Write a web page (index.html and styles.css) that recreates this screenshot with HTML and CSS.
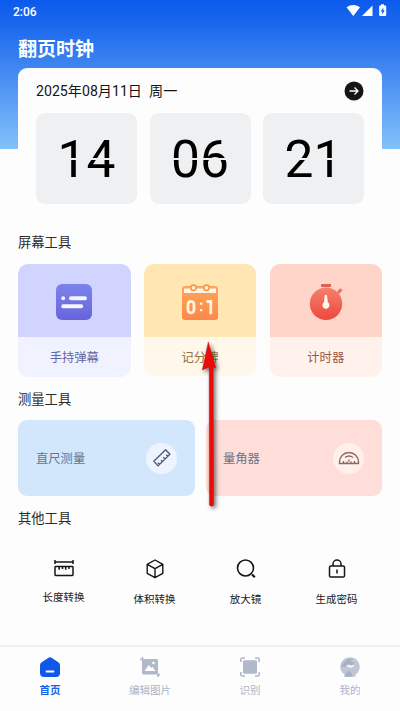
FILE: index.html
```html
<!DOCTYPE html>
<html lang="zh-CN">
<head>
<meta charset="utf-8">
<title>翻页时钟</title>
<link rel="stylesheet" href="styles.css">
</head>
<body>
<div class="app">
  <header class="hero">
    <div class="status">
      <span>2:06</span>
      <svg class="status-icons" width="42" height="14" viewBox="0 0 42 14" fill="#fff">
        <path d="M0.5 3.2Q7.2-1.4 14 3.2L7.3 12Z"/>
        <path d="M26.500 1.500V12H16Z"/>
        <path fill-rule="evenodd" d="M35 1.500V.3h3v1.200h1.400q.8 0 .8.800v9q0 .8-.8.800h-5.400q-.8 0-.8-.8v-9q0-.8.800-.8zM37.300 3.500 34.800 7.600h1.400v2.900l2.500-4.200h-1.400z"/>
      </svg>
    </div>
    <h1>翻页时钟</h1>
  </header>

  <section class="clock">
    <div class="date-row">
      <span class="date">2025年08月11日&nbsp; 周一</span>
      <svg width="20" height="20" viewBox="0 0 20 20"><circle cx="10" cy="10" r="9.500" fill="#151515"/><path d="M5.500 10h8.500M10.500 6.500 14 10l-3.500 3.500" fill="none" stroke="#fff" stroke-width="1.300"/></svg>
    </div>
    <div class="flips">
      <div class="flip">14</div>
      <div class="flip">06</div>
      <div class="flip">21</div>
    </div>
  </section>

  <h2 class="h-screen">屏幕工具</h2>
  <section class="cards">
    <div class="card violet">
      <div class="art">
        <svg width="36" height="36" viewBox="0 0 36 36">
          <defs><linearGradient id="gv" x2="0" y2="1"><stop stop-color="#7c83ec"/><stop offset="1" stop-color="#6864dc"/></linearGradient></defs>
          <rect width="36" height="36" rx="6" fill="url(#gv)"/>
          <g stroke="#f3f5ff" stroke-width="4" stroke-linecap="round"><path d="M7.200 14.200h.01M15 14.200h14M7.200 22.200h18"/></g>
        </svg>
      </div>
      <div class="label">手持弹幕</div>
    </div>
    <div class="card yellow">
      <div class="art">
        <svg width="36" height="36" viewBox="0 0 36 36">
          <defs><linearGradient id="gy" x2="0" y2="1"><stop stop-color="#ffa65a"/><stop offset="1" stop-color="#fc884b"/></linearGradient></defs>
          <rect y="2" width="36" height="34" rx="3" fill="url(#gy)"/>
          <path d="M2 4.500h32v4.500h-32z" fill="#fff6e7"/>
          <circle cx="11.500" cy="3.700" r="2.700" fill="#fff0d2" stroke="#fb9140" stroke-width="1.500"/>
          <circle cx="24.500" cy="3.700" r="2.700" fill="#fff0d2" stroke="#fb9140" stroke-width="1.500"/>
          <g fill="none" stroke="#fff5df" stroke-width="2.800"><rect x="6" y="17.300" width="6" height="11.500" rx="3"/><path d="M24.500 17.500h4.300v12.700"/></g>
          <path d="M18 18.500h2.200v2.200H18zM18 25h2.200v2.200H18z" fill="#fff5df"/>
        </svg>
      </div>
      <div class="label">记分牌</div>
    </div>
    <div class="card coral">
      <div class="art">
        <svg width="36" height="36" viewBox="0 0 36 36">
          <defs><linearGradient id="gr" x2="0" y2="1"><stop stop-color="#f3816c"/><stop offset="1" stop-color="#ed483f"/></linearGradient></defs>
          <rect x="13" y="0" width="10" height="3" rx=".8" fill="#da6254"/>
          <path d="m28.500 10.500 3-3" stroke="#ed7060" stroke-width="2"/><path d="m30.300 8.300 3.200-3" stroke="#ed7060" stroke-width="3.200"/>
          <circle cx="18" cy="19.800" r="16.200" fill="url(#gr)"/>
          <path d="M16.600 12.500q.1-1.800 1.300-1.800t1.300 1.800l.6 5.800a3.500 3.500 0 1 1-3.800 0z" fill="#fff5ee"/>
        </svg>
      </div>
      <div class="label">计时器</div>
    </div>
  </section>

  <h2 class="h-measure">测量工具</h2>
  <section class="measures">
    <div class="measure blue">
      <span>直尺测量</span>
      <i class="disc"><svg width="20" height="20" viewBox="0 0 20 20" fill="none" stroke="#4d5a76" stroke-width="1.300" stroke-linejoin="round"><path d="M1.800 13.200 13.600 1.700 17.900 6.200 6.100 17.900ZM7.500 16.500 5.800 14.600M10.300 13.700 9 12.300M13 11 11.300 9.100M15.700 8.300 14.300 6.800"/></svg></i>
    </div>
    <div class="measure pink">
      <span>量角器</span>
      <i class="disc"><svg width="22" height="20" viewBox="0 0 22 20" fill="none" stroke="#8b6963" stroke-width="1.400" stroke-linejoin="round"><path d="M1.500 15.500V14a9.500 9.500 0 0 1 19 0v1.500ZM5.500 15v-2M9 15v-1.500M13 15v-1.500M16.500 15v-2M7 9.500Q11 6.500 15 9.500M11 11.500v2"/></svg></i>
    </div>
  </section>

  <h2 class="h-other">其他工具</h2>
  <section class="tools">
    <div class="tool first">
      <svg width="22" height="20" viewBox="0 0 22 20" fill="none" stroke="#161616" stroke-width="1.500"><path d="M2 1v4M20 1v4M2 3h18"/><rect x="2" y="7.500" width="18" height="9" rx=".7"/><path d="M6.200 8v2.700M9.500 8v2M12.700 8v2.700M16 8v2"/></svg>
      <span>长度转换</span>
    </div>
    <div class="tool">
      <svg width="22" height="20" viewBox="0 0 22 20" fill="none" stroke="#161616" stroke-width="1.400" stroke-linejoin="round"><path d="m11 1 7.800 4.300v9L11 18.700l-7.800-4.400v-9zM3.200 5.400 11 9.700l7.800-4.300M11 9.700v9"/></svg>
      <span>体积转换</span>
    </div>
    <div class="tool">
      <svg width="22" height="20" viewBox="0 0 22 20" fill="none" stroke="#161616" stroke-width="1.600"><circle cx="10.500" cy="9" r="8"/><path stroke-width="2.200" d="m17 15.500 2.800 2.800"/></svg>
      <span>放大镜</span>
    </div>
    <div class="tool">
      <svg width="22" height="20" viewBox="0 0 22 20" fill="none" stroke="#161616" stroke-width="1.500"><rect x="3.500" y="7" width="15" height="11" rx="1.300"/><path d="M7 7V5a4 4 0 0 1 8 0v2M11 10.500v4"/></svg>
      <span>生成密码</span>
    </div>
  </section>

  <nav class="tabs">
    <div class="tab active">
      <svg width="22" height="20" viewBox="0 0 22 20"><path d="M9.500.8q1.500-1 3 0l6.800 4.400q1.700 1.100 1.700 3V16q0 4-4 4H5q-4 0-4-4V8.200q0-1.900 1.700-3z" fill="#1059e8"/><path d="M7.500 14.500h7" stroke="#fff" stroke-width="1.800" stroke-linecap="round"/></svg>
      <span>首页</span>
    </div>
    <div class="tab">
      <svg width="22" height="20" viewBox="0 0 22 20"><path d="M3.500 0v3M1 2.500h3M19 17v3M18 17.700h3" stroke="#b0b8ca" stroke-width="1.700"/><rect x="3" y="2" width="16" height="15.500" rx="1.500" fill="#b0b8ca"/><path d="m5.500 14 4.300-6 2.500 3 1-1.200 3.200 4.200z" fill="#fff"/><circle cx="14.500" cy="6" r="1.300" fill="#fff"/></svg>
      <span>编辑图片</span>
    </div>
    <div class="tab">
      <svg width="22" height="20" viewBox="0 0 22 20"><path d="M1.800 5V2.500Q1.800 1 3.300 1H6M16 1h2.700q1.500 0 1.500 1.500V5M20.200 15v2.500q0 1.500-1.500 1.500H16M6 19H3.300q-1.500 0-1.500-1.500V15" fill="none" stroke="#b0b8ca" stroke-width="1.600"/><rect x="4" y="3.200" width="14" height="13.600" rx="1" fill="#b0b8ca"/></svg>
      <span>识别</span>
    </div>
    <div class="tab">
      <svg width="22" height="20" viewBox="0 0 22 20"><path d="M11 .2a9.500 9.500 0 0 1 5.500 17.300v2.300h-11v-2.300A9.500 9.500 0 0 1 11 .2z" fill="#bfc7d4"/><path d="M1.500 9.500 8.500 2l6-.5L9 6.500l-3 3.500zM5.500 19.800q1-4.300 5.500-6.300l2.800 6.300z" fill="#a6b1c3"/><path d="M7.500 9.300Q11.500 5 15.500 8.500 12 12.500 7.500 9.300z" fill="#f5f7fb"/><path d="M7 5.500q4-2.500 8.500.5L13 8.500 9 7.500z" fill="#a6b1c3"/></svg>
      <span>我的</span>
    </div>
  </nav>

  <svg class="pointer" width="28" height="174" viewBox="0 0 28 174">
    <path d="M10.300 4 17.800 30 15.200 29 15.600 167Q13.500 169.500 11.400 167L11.200 29 4.300 32Z" fill="#ea0b0b" stroke="#c01010" stroke-width=".4"/>
  </svg>
</div>
</body>
</html>
```
FILE: styles.css
```css
* { box-sizing: border-box; }

body {
  margin: 0;
  background: #fdfdfd;
  color: #2b2b2b;
  font-family: Roboto, "Noto Sans CJK SC", sans-serif;
}

.app {
  position: relative;
  display: flex;
  flex-direction: column;
  height: 711px;
  overflow: hidden;
}

h1, h2 { margin: 0; }

svg { display: block; flex: none; }

.hero {
  flex: none;
  height: 149px;
  padding: 0 12px 0 13px;
  background: linear-gradient(#0b5aec 0, #1b68ed 25px, #468cf2 75px, #82c2fa 149px);
  color: #fff;
}

.status {
  display: flex;
  justify-content: space-between;
  align-items: center;
  height: 23px;
  font-size: 12px;
  font-weight: 500;
}

.status-icons { margin-top: -1px; }

h1 {
  margin: 13px 0 0 5px;
  font-size: 19px;
  font-weight: 700;
  line-height: 28px;
}

.clock {
  flex: none;
  height: 148px;
  margin: -81px 18px 0;
  padding: 13px 18px 0;
  border-radius: 9px;
  background: #fdfdfd;
}

.date-row {
  display: flex;
  align-items: center;
  justify-content: space-between;
  height: 20px;
  color: #151515;
  font-size: 14.150px;
}

.date { margin-top: -2px; }

.flips {
  display: grid;
  grid-template-columns: repeat(3, 1fr);
  gap: 12.500px;
  margin-top: 12px;
}

.flip {
  position: relative;
  height: 91px;
  border-radius: 9px;
  background: #eff0f2;
  color: #000;
  font-size: 51.500px;
  line-height: 93px;
  text-align: center;
}

.flip::after {
  content: "";
  position: absolute;
  top: 45px;
  left: 0;
  width: 100%;
  height: 2px;
  background: #eff0f2;
}

h2 {
  flex: none;
  height: 20px;
  padding-left: 18px;
  font-size: 13.300px;
  font-weight: 400;
  line-height: 20px;
}

.h-screen { margin-top: 17px; }
.h-measure { margin-top: 13px; }
.h-other { margin-top: 13px; }

.cards {
  display: grid;
  grid-template-columns: repeat(3, 112.500px);
  justify-content: space-between;
  height: 113px;
  margin: 11px 18px 0;
}

.card {
  display: flex;
  flex-direction: column;
  overflow: hidden;
  border-radius: 10px;
  font-size: 12.300px;
}

.art {
  display: flex;
  flex: none;
  align-items: flex-start;
  justify-content: center;
  height: 73px;
  padding-top: 20px;
}

.label {
  flex: none;
  height: 40px;
  line-height: 43px;
  text-align: center;
}

.violet .art { background: #d0d4ff; }
.violet .label { background: #f0f2ff; color: #6265a0; }
.yellow .art { background: #ffe6b2; }
.yellow .label { background: #fff7e9; color: #94743e; }
.yellow { height: 112px; }
.coral .art { background: #ffd5ca; }
.coral .label { background: #fff2ed; color: #995747; }

.measures {
  display: flex;
  justify-content: space-between;
  height: 76px;
  margin: 10px 18px 0;
}

.measure {
  display: flex;
  align-items: center;
  justify-content: space-between;
  width: 177px;
  padding: 0 18px;
  border-radius: 9px;
  color: #65758b;
  font-size: 12.300px;
}

.blue { background: #d3e7fc; }
.pink { width: 176px; padding-left: 17px; background: #ffddd9; }

.disc {
  display: grid;
  place-items: center;
  width: 31px;
  height: 31px;
  border-radius: 50%;
  background: #edf4ff;
}

.pink .disc { background: #fff0eb; }

.tools {
  display: grid;
  grid-template-columns: repeat(4, 91px);
  margin: 30px 18px 0;
}

.tool {
  display: flex;
  flex-direction: column;
  align-items: center;
  gap: 13px;
  font-size: 10.500px;
  line-height: 16px;
  color: #202020;
}

.first { gap: 11px; }

.tabs {
  display: grid;
  grid-template-columns: repeat(4, 1fr);
  height: 66px;
  margin-top: auto;
  border-top: 2px solid #efeff0;
  padding-top: 10px;
}

.tab {
  display: flex;
  flex-direction: column;
  align-items: center;
  gap: 6px;
  color: #adb4c5;
  font-size: 10.500px;
  line-height: 16px;
}

.active {
  color: #1764e8;
  font-weight: 700;
}

.pointer {
  position: absolute;
  top: 338px;
  left: 198px;
  overflow: visible;
  filter: drop-shadow(2px 2px 2px rgb(0 0 0 / 60%));
}
```
